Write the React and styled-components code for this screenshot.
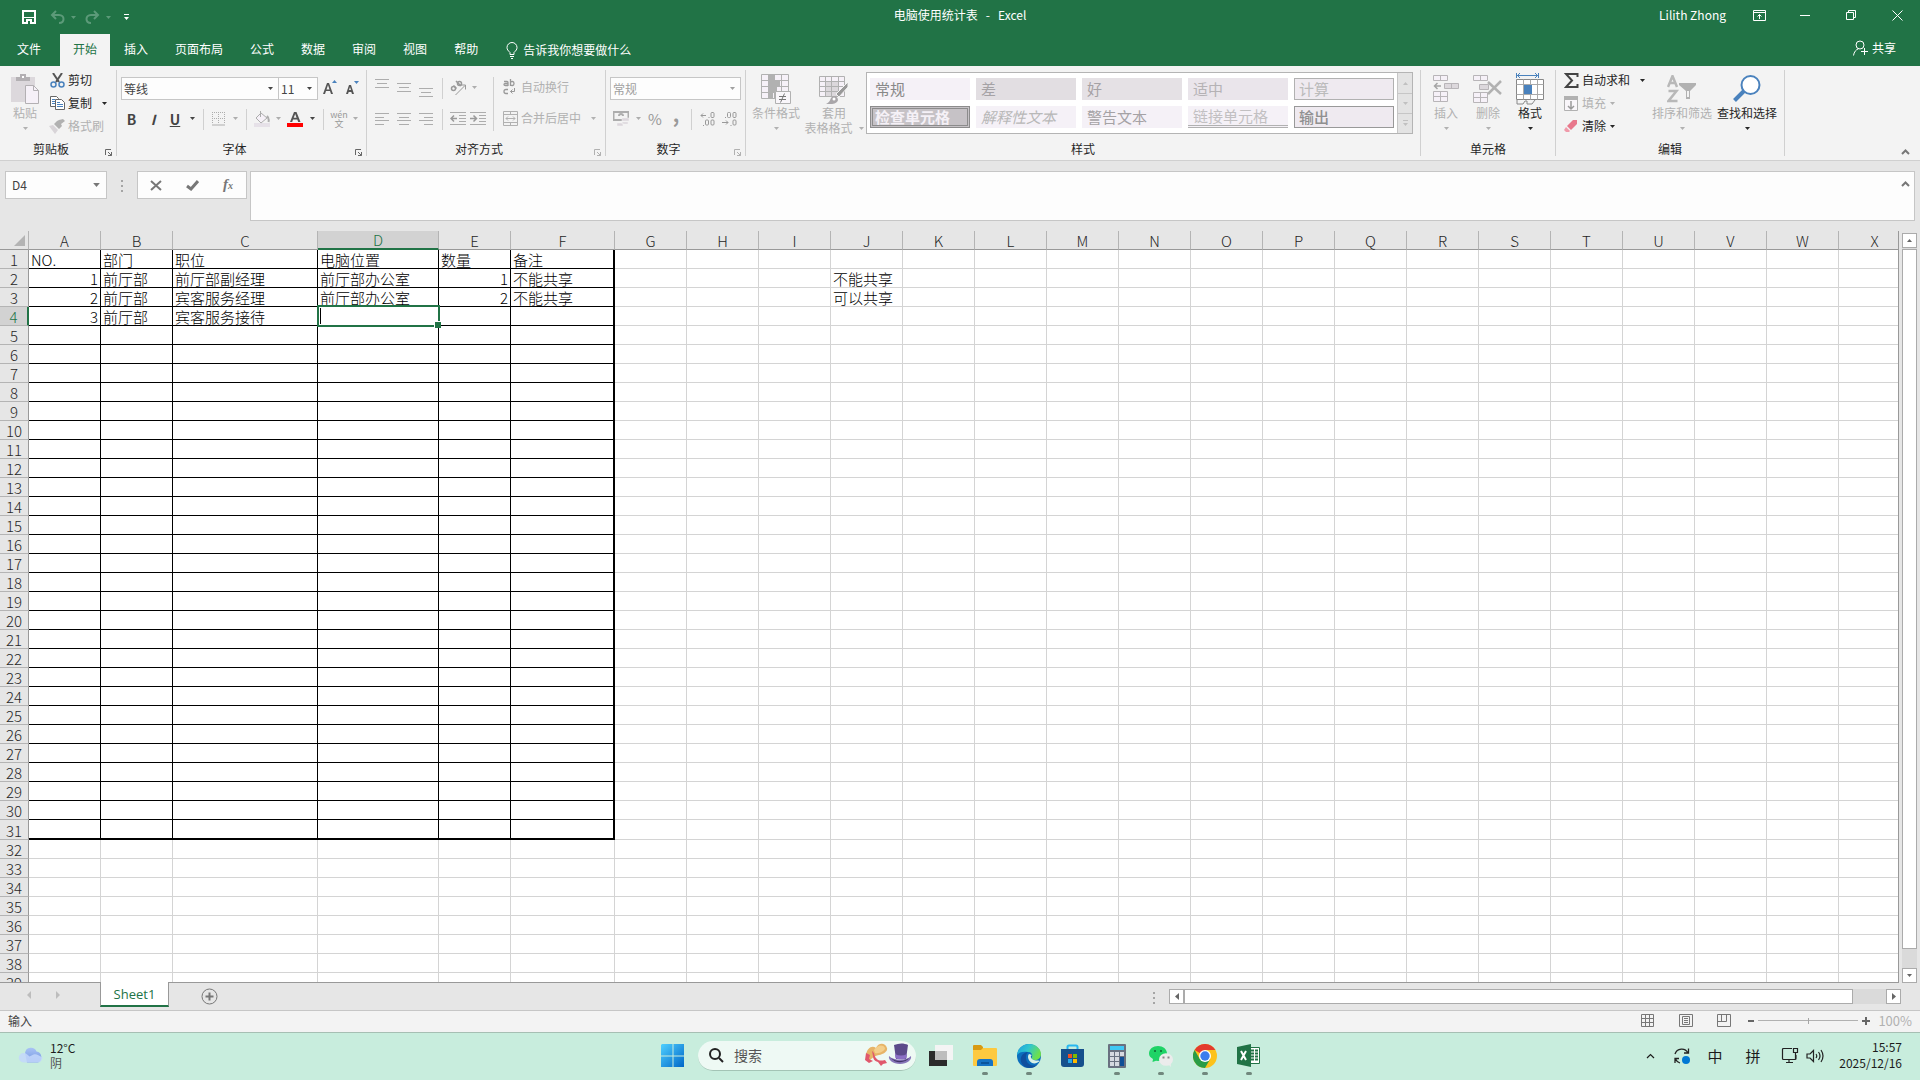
import React from 'react';
import styled, { createGlobalStyle, css } from 'styled-components';

const GREEN = '#217346';

/* ---------- data ---------- */

const COLUMNS = [
	['A', 72], ['B', 72], ['C', 145], ['D', 121], ['E', 72], ['F', 104],
	...'GHIJKLMNOPQRSTUVWX'.split('').map(name => [name, 72]),
];
const ROW_COUNT = 39;
const TABLE_WIDTH = COLUMNS.reduce((sum, col) => sum + col[1], 29);

const CELLS = {
	A1: 'NO.', B1: '部门', C1: '职位', D1: '电脑位置', E1: '数量', F1: '备注',
	A2: 1, B2: '前厅部', C2: '前厅部副经理', D2: '前厅部办公室', E2: 1, F2: '不能共享', J2: '不能共享',
	A3: 2, B3: '前厅部', C3: '宾客服务经理', D3: '前厅部办公室', E3: 2, F3: '不能共享', J3: '可以共享',
	A4: 3, B4: '前厅部', C4: '宾客服务接待',
};

const TABS = ['插入', '页面布局', '公式', '数据', '审阅', '视图', '帮助'];

const STYLES = [
	['常规', 'normal'], ['差', 'bad'], ['好', 'good'], ['适中', 'neutral'], ['计算', 'calc'],
	['检查单元格', 'check'], ['解释性文本', 'explain'], ['警告文本', 'warn'], ['链接单元格', 'linked'], ['输出', 'output'],
];

/* ---------- icons ---------- */

const Caret = ({ up }) => (
	<svg width="5" height="3" viewBox="0 0 5 3" fill="currentColor"><path d={up ? 'M0 3h5L2.5 0z' : 'M0 0h5L2.5 3z'} /></svg>
);

const Svg = ({ w = 16, h = 16, children, ...rest }) => (
	<svg width={w} height={h} viewBox={`0 0 ${w} ${h}`} fill="none" stroke="currentColor" {...rest}>{children}</svg>
);

const SaveIcon = () => (
	<Svg w={14} h={14} strokeWidth="2"><path d="M1 1h12v12H1z" /><path d="M1 7.500h12" strokeWidth="1" /><path d="M4 9h6v5H4z" fill="currentColor" stroke="none" /><path d="M6 11h2v3H6z" fill={GREEN} stroke="none" /></Svg>
);
const UndoIcon = ({ flip }) => (
	<Svg w={15} h={15} strokeWidth="2" transform={flip ? 'scale(-1 1)' : undefined}><path d="M6 1 2 5l4 4M2 5h7c3 0 4.500 2 4.500 4 0 2.500-2 4-4.500 4" /></Svg>
);
const CustomizeIcon = () => (
	<Svg w={7} h={7} fill="currentColor" stroke="none"><path d="M1 0h5v1H1zM1 3h5L3.500 6z" /></Svg>
);
const DisplayIcon = () => (
	<Svg w={13} h={11}><path d="M.5.5h12v10H.5zM.5 2.500h12M6.500 9V4.500M4.500 6.500l2-2 2 2" /></Svg>
);
const MinIcon = () => <Svg w={10} h={10}><path d="M0 5.500h10" /></Svg>;
const RestoreIcon = () => <Svg w={10} h={10}><path d="M.5 2.500h7v7h-7zM2.500 2.500v-2h7v7h-2" /></Svg>;
const CloseIcon = () => <Svg w={11} h={11}><path d="m.5.5 10 10M10.500.5l-10 10" /></Svg>;
const BulbIcon = () => (
	<Svg w={12} h={17}><path d="M4 12.500v-2C2 8.500 1 7.500 1 5.500a5 5 0 0 1 10 0c0 2-1 3-3 5v2zM4 14.500h4M5 16.500h2" /></Svg>
);
const PersonIcon = () => (
	<Svg w={15} h={16}><circle cx="7" cy="5" r="4" /><path d="M.5 15.500C1 12 3 9.500 5.500 8.800M11.500 8v7M8 11.500h7" /></Svg>
);

const PasteIcon = () => (
	<Svg w={30} h={30}><path d="M1 3h24v25H1z" fill="#dcd8dc" stroke="none" /><path d="M6 7V3h4V0h6v3h4v4z" fill="#b3b0b3" stroke="none" /><path d="M12 2h2v2h-2z" fill="#fff" stroke="none" /><path d="M15.500 11.500h8l5 5v13h-13z" fill="#f6f1f8" stroke="#b3b0b3" /><path d="M23.500 11.500v5h5" stroke="#b3b0b3" /></Svg>
);
const CutIcon = () => (
	<Svg w={15} h={15}><path d="M3 0l6 9M12 0L6 9" stroke="#555" strokeWidth="2" /><circle cx="3.500" cy="11.500" r="2.500" stroke="#4a82bd" strokeWidth="1.500" /><circle cx="11.500" cy="11.500" r="2.500" stroke="#4a82bd" strokeWidth="1.500" /></Svg>
);
const CopyIcon = () => (
	<Svg w={15} h={14} stroke="#666"><path d="M.5.5h6l2 2v8h-8z" fill="#fff" /><path d="M2 3.500h3M2 5.500h3M2 7.500h3" stroke="#4a82bd" /><path d="M5.500 3.500h6l3 3v7h-9z" fill="#fff" /><path d="M7 6.500h3M7 8.500h6M7 10.500h6" stroke="#4a82bd" /></Svg>
);
const BrushIcon = () => (
	<Svg w={16} h={15} stroke="none"><path d="M10 1l4-1 2 2-4 3 1 2-3 3-5-5 3-3z" fill="#b1b1b1" /><path d="M4 6l5 5-3 4L0 7z" fill="#d8d4d8" /></Svg>
);
const GrowIcon = () => (
	<Svg w={15} h={15} stroke="none"><path d="M9 3l2.500-3L14 3z" fill="#4a82bd" /><path d="M0 14L4 3h2l4 11H8l-1-3H3l-1 3zM3.500 9.500h3L5 5z" fill="#555" /></Svg>
);
const ShrinkIcon = () => (
	<Svg w={15} h={15} stroke="none"><path d="M9 1h5l-2.500 3z" fill="#4a82bd" /><path d="M1 14L4 5h2l3 9H7l-.7-2H3.700L3 14zM4 10h2L5 7z" fill="#555" /></Svg>
);
const BordersIcon = () => (
	<Svg w={14} h={14}><path d="M.5 0v12M6.500 0v12M12.500 0v12M0 .5h13M0 6.500h13" strokeDasharray="1 1" /><path d="M0 13h13" /></Svg>
);
const FillColorIcon = () => (
	<Svg w={16} h={16}><path d="M0 12h16v4H0z" fill="#e6e1e8" stroke="none" /><path d="M7 2l6 5-6 5-5-5zM6.500 0v6" fill="#f6f1f8" /><path d="M13 5c2 2 2 4 1.500 6" strokeWidth="2" /></Svg>
);
const FontColorIcon = () => (
	<Svg w={16} h={16} stroke="none"><path d="M3 11L7 1h2.500l4 10h-2.300l-.9-2.500H6L5.200 11zM6.700 6.800h2.900L8.200 3z" fill="#555" /><path d="M0 12h16v4H0z" fill="#f00" /></Svg>
);
const AlignIcon = ({ lines, h = 12 }) => (
	<Svg w={14} h={h}>{lines.map(([x, y, len]) => <path key={y} d={`M${x} ${y}.5h${len}`} />)}</Svg>
);
const OrientIcon = () => (
	<Svg w={17} h={16}><path d="M5.500 15L15 5.500M11 5h4.500v4.500" /><circle cx="3.500" cy="8.500" r="2" strokeWidth="1.500" /><path d="M3.500 5.500l3 3M6 1l5 5" strokeWidth="1.500" /><circle cx="9.500" cy="3.500" r="2" strokeWidth="1.500" /></Svg>
);
const IndentIcon = ({ right }) => (
	<Svg w={16} h={13}><path d="M0 .5h16M9 3.500h7M9 6.500h7M9 9.500h7M0 12.500h16" /><path d={right ? 'M0 6.500h6M3.500 3.500l3 3-3 3' : 'M1 6.500h6M4 3.500l-3 3 3 3'} stroke="#999" strokeWidth="1.500" /></Svg>
);
const WrapIcon = () => (
	<Svg w={14} h={16} stroke="#999"><path d="M1 2.500h3q1 0 1 1V7M5 4.500H2.500q-1.500 0-1.500 1t1.500 1H5M7.500 0v7M7.500 3.500q0-1 1.500-1h.5q1.500 0 1.500 2t-1.500 2H9q-1.500 0-1.500-1M5 10.500H3q-2 0-2 2t2 2h2" strokeWidth="1.300" /><path d="M11.500 9v3.500h-4M9.500 10.500l-2 2 2 2" /></Svg>
);
const MergeIcon = () => (
	<Svg w={15} h={15}><path d="M.5.5h14v14H.5zM.5 3.500h14M.5 11.500h14M7.500.5v3M7.500 11.500v3M3 7.500h9M5 5.500l-2 2 2 2M10 5.500l2 2-2 2" /></Svg>
);
const CurrencyIcon = () => (
	<Svg w={16} h={16}><path d="M.5 1h15v8H.5z" strokeWidth="2" /><path d="M6 5a2 2 0 1 1 4 0" strokeWidth="2" /><path d="M9 7h7v3H9zM9 11h6v2H9zM4 12h6v3H4z" fill="#dcd6dc" stroke="#f3f3f3" strokeWidth=".5" /></Svg>
);
/* small zeros and dots around an arrow */
const DecimalIcon = ({ less }) => (
	<Svg w={16} h={14} stroke="#999">
		{less
			? <><path d="M3 5.500h1M9 8.500" strokeWidth="1" /><rect x="5.500" y=".5" width="3" height="5" rx="1" /><rect x="11" y=".5" width="3" height="5" rx="1" /><path d="M0 10.500h6M4 8.500l2 2-2 2M8.500 13.500h1" /><rect x="11" y="8" width="3" height="5" rx="1" /></>
			: <><path d="M1 3.500h5M3 1.500l-2 2 2 2M8.500 5.500h1M3 13.500h1" /><rect x="11" y=".5" width="3" height="5" rx="1" /><rect x="5.500" y="8" width="3" height="5" rx="1" /><rect x="11" y="8" width="3" height="5" rx="1" /></>}
	</Svg>
);
const LauncherIcon = () => <Svg w={7} h={7}><path d="M.5 6V.5H6M3 3l3.500 3.500M6.500 3v3.500H3" /></Svg>;

const CondIcon = () => (
	<Svg w={30} h={30} stroke="#b1b1b1"><path d="M.5.5h27v24H.5z" fill="#f6f1f8" /><path d="M.5 6.500h27M.5 12.500h27M.5 18.500h27M7.500.5v24M13.500.5v24M20.500.5v24" /><path d="M8 1h6v6H8zM8 7h11v6H8zM8 13h8v6H8zM8 19h4v6H8z" fill="#b1b1b1" stroke="none" /><path d="M14.500 17.500h15v12h-15z" fill="#f9f6fa" /><path d="M18 22.500h7M18 25.500h7M23.500 19.500l-4 9" stroke="#777" /></Svg>
);
const TableFormatIcon = () => (
	<Svg w={30} h={30} stroke="#b1b1b1"><path d="M.5 2.500h25v20H.5z" fill="#f6f1f8" /><path d="M7 8h12v14H7z" fill="#dcd8dc" stroke="none" /><path d="M.5 7.500h25M.5 12.500h25M.5 17.500h25M6.500 2.500v20M12.500 2.500v20M19.500 2.500v20" /><path d="M29 8v5l-9 10-3-3z" fill="#999" stroke="#f3f3f3" /><path d="M7 30c4-2 4-4 5-6 2-3 7-2 7 2 0 3-6 5-12 4z" fill="#a9a6a9" stroke="none" /><circle cx="15" cy="25" r="1.500" fill="#fff" stroke="none" /></Svg>
);
const InsertIcon = () => (
	<Svg w={28} h={28} stroke="#b8b5b8" fill="#f6f1f8"><path d="M1.500.5h14v5h-14zM8.500.5v5M1.500 16.500h14v10h-14zM1.500 21.500h14M8.500 16.500v10" /><path d="M12.500 8.500h14v5h-14z" fill="#dcd8dc" /><path d="M19.500 8.500v5" /><path d="M9 11H3M5.500 8l-3 3 3 3" stroke="#a5a5a5" strokeWidth="1.500" fill="none" /></Svg>
);
const DeleteIcon = () => (
	<Svg w={30} h={28} stroke="#b8b5b8" fill="#f6f1f8"><path d="M.5.500h14v5H.5zM7.500.5v5M.5 17.500h14v10H.5zM.5 22.500h14M7.500 17.500v10" /><path d="M6.500 9.500h9v5h-9z" fill="#dcd8dc" /><path d="M15 7l13 12M28 6L15 19" stroke="#b1b1b1" strokeWidth="2.500" /></Svg>
);
const FormatIcon = () => (
	<Svg w={28} h={32}><path d="M.5 0v5M22.500 0v5M1 2.500h21M4 0L1.500 2.500 4 5M19 0l2.500 2.500L19 5" stroke="#4a82bd" /><path d="M.5 6.500h27v20H.5z" fill="#fff" stroke="#888" /><path d="M.5 11.500h27M.5 21.500h27M7.500 6.500v20M14.500 6.500v20M21.500 6.500v20" stroke="#aaa" /><path d="M8 12h8v9H8z" fill="#4a82bd" stroke="none" /><path d="M1 27v4h6l2-3h2v3h5l3-4" stroke="#888" /></Svg>
);
const SumIcon = () => <Svg w={15} h={15} strokeWidth="2" stroke="#444"><path d="M13.500 4V1H2l6 6.500L2 14h11.500v-3" /></Svg>;
const FillIcon = () => <Svg w={14} h={15}><path d="M.5.5h13v14H.5z" fill="#f9f6fa" /><path d="M0 0h14v4H0z" fill="currentColor" stroke="none" /><path d="M7 5v8M4 10l3 3 3-3" stroke="#999" strokeWidth="1.500" /></Svg>;
const EraserIcon = () => <Svg w={14} h={14} stroke="none"><path d="M9 1h4v4l-6 6-4-4z" fill="#e8788c" /><path d="M2 8l4 4-1 1H2L0 11z" fill="#f09aaa" /></Svg>;
const SortIcon = () => (
	<Svg w={30} h={28}><path d="M1 12L5.500 1 10 12M2.500 8h6M1.500 16h8L1.500 26h9" strokeWidth="2.500" stroke="#b8b8b8" /><path d="M12 8h17v2l-6 6v8h-4v-8l-7-6z" fill="#b1b1b1" stroke="none" /><path d="M20 16h2v6h-2z" fill="#f3f3f3" stroke="none" /></Svg>
);
const FindIcon = () => (
	<Svg w={30} h={30} stroke="#4a82bd"><circle cx="18.500" cy="11" r="9" fill="#fff" strokeWidth="2" /><path d="M12 17L2.500 26.500" strokeWidth="4" /></Svg>
);
const ChevronIcon = ({ w = 9, stroke = 2 }) => <svg width={w} height="6" viewBox="0 0 9 6" fill="none" stroke="currentColor" strokeWidth={stroke}><path d="M1 5l3.500-3.500L8 5" /></svg>;

const CloudIcon = () => (
	<svg width="26" height="18" viewBox="0 0 26 18">
		<defs><linearGradient id="cloud" x1="0" y1="0" x2="0" y2="1"><stop offset="0" stopColor="#a9c3f5" /><stop offset="1" stopColor="#7397e0" /></linearGradient></defs>
		<path d="M7 7a6 6 0 0 1 11.500-1.500A5.800 5.800 0 0 1 20 16.500H9z" fill="url(#cloud)" />
		<path d="M5.500 16.500a4.700 4.700 0 0 1 0-9.500c3 0 4 2 6 3.500l4-2c3-1 5 1 9 3-.5 3-2 5-5 5z" fill="#c3d7fb" opacity=".85" />
	</svg>
);
const WindowsIcon = () => (
	<svg width="24" height="24" viewBox="0 0 24 24">
		<defs><linearGradient id="win" x1="0" y1="0" x2="1" y2="1"><stop offset="0" stopColor="#4fd0ff" /><stop offset="1" stopColor="#0067c8" /></linearGradient></defs>
		<path d="M1 0h10.500v11.500H0V1zM12.500 0H23v11.500H12.500zM0 12.500h11.500V23H0zM12.500 12.500H23V23H12.500z" fill="url(#win)" />
	</svg>
);
const HatsIcon = () => (
	<svg width="48" height="24" viewBox="0 0 48 24">
		<path d="M2 12C3 5 8 2 12 5c2-5 9-6 11 0 1 3-3 6-8 7C9 13 7 17 4 18z" fill="#e7b468" />
		<path d="M10 7c3-5 9-6 11-2 0 3-6 6-10 5z" fill="#f4cf8c" />
		<path d="M2 10l4 2-1 4 4 2-4 2-4-3zM8 8c3 2 2 5 4 7 2 3 5 3 9 2l2 3-4 1-2 2-3-4c-4-1-5-4-5-6z" fill="#e0586c" />
		<path d="M30 2c5-2 10-2 14 0l-2 14H32z" fill="#5b4a8a" />
		<path d="M31 11c4 2 8 2 12 0l-.5 4c-4 2-7 2-11 0z" fill="#8b6fc4" />
		<path d="M25 13c5 5 17 5 22 0 1 4-4 8-11 8s-12-4-11-8z" fill="#8674b8" />
		<path d="M27 15c5 4 13 4 18 0-3 5-14 6-18 0z" fill="#413367" />
	</svg>
);
const TaskViewIcon = () => (
	<svg width="24" height="24" viewBox="0 0 24 24"><path d="M0 7h18v15H0z" fill="#2b2b2b" /><path d="M6 1h18v15H6z" fill="#f4f4f4" /><path d="M6 7h12v9H6z" fill="#bdbdbd" /></svg>
);
const FolderIcon = () => (
	<svg width="24" height="24" viewBox="0 0 24 24"><path d="M0 2q0-1 1-1h7l2 2v4H0z" fill="#d89a12" /><path d="M0 6h8l2-2h13q1 0 1 1v16q0 1-1 1H1q-1 0-1-1z" fill="#fdc93f" /><path d="M4 22v-4q0-3 3-3h10q3 0 3 3v4z" fill="#1673c4" /><path d="M8 18h8v2H8z" fill="#0b559c" /></svg>
);
const EdgeIcon = () => (
	<svg width="24" height="24" viewBox="0 0 24 24">
		<defs><linearGradient id="edge" x1="0" y1="0" x2="1" y2=".4"><stop offset="0" stopColor="#1a9fe0" /><stop offset=".5" stopColor="#2fc6cf" /><stop offset="1" stopColor="#6de04c" /></linearGradient></defs>
		<circle cx="12" cy="12" r="12" fill="#0c6ebd" />
		<path d="M0 11C1 4 6 0 12 0c7 0 12 5 12 10 0 4-3 6-6 6-3 0-4-1-3-3 1-3-1-5-4-5-5-1-9 0-11 3z" fill="url(#edge)" />
		<path d="M8 23C1 18 3 9 11 8c-3 3-3 9 1 12 3 2 7 2 9 0-3 4-8 5-13 3z" fill="#0f4f9e" />
		<path d="M12 10c-2 2-1 7 3 9 3 1 5 0 8-2-2-1-6 0-8-2-1-1-2-3 0-4z" fill="#d8f0e6" />
	</svg>
);
const StoreIcon = () => (
	<svg width="24" height="24" viewBox="0 0 24 24"><path d="M6.500 6V3q0-1.500 1.500-1.500h7q1.500 0 1.500 1.500v3" fill="none" stroke="#28b8f0" strokeWidth="2" /><path d="M0 5h23v15q0 3-3 3H3q-3 0-3-3z" fill="#16508c" /><path d="M7 10h4v4H7z" fill="#f25022" /><path d="M12 10h4v4h-4z" fill="#7fba00" /><path d="M7 15h4v4H7z" fill="#28a8ea" /><path d="M12 15h4v4h-4z" fill="#ffb900" /></svg>
);
const CalcIcon = () => (
	<svg width="24" height="24" viewBox="0 0 24 24"><rect x="3" width="18" height="24" rx="1" fill="#697180" /><path d="M5 2h14v4H5z" fill="#3fc8f4" />
		{[8, 13, 18].map(y => [5, 10, 15].map(x => <path key={x + '-' + y} d={`M${x} ${y}h4v4h-4z`} fill={x === 15 && y > 8 ? '#0f4f96' : '#d5d9e0'} />))}
		<path d="M15 13h4v9h-4z" fill="#0f4f96" /></svg>
);
const WechatIcon = () => (
	<svg width="24" height="24" viewBox="0 0 24 24"><path d="M9 2c5 0 9 3 9 7.500S14 17 9 17l-2-.3L3.500 18l.5-3C1.500 13.500 0 12 0 9.500 0 5 4 2 9 2z" fill="#1fd366" /><ellipse cx="17" cy="15.500" rx="7" ry="6.300" fill="#ececec" /><path d="M19 20l3 3-.5-4z" fill="#ececec" /><path d="M5 6h2v2H5zM11 6h2v2h-2z" fill="#11803d" /><path d="M13.500 12.500h2v2h-2zM18.500 12.500h2v2h-2z" fill="#888" /></svg>
);
const ChromeIcon = () => (
	<svg width="24" height="24" viewBox="0 0 24 24"><circle cx="12" cy="12" r="12" fill="#fcc21b" /><path d="M12 12L1.600 6A12 12 0 0 1 22.400 6H12z" fill="#e33b2e" /><path d="M1.600 6A12 12 0 0 0 12 24l5.200-9-5.200-3-5.200 3z" fill="#2a9c46" /><circle cx="12" cy="12" r="6" fill="#fff" /><circle cx="12" cy="12" r="4.700" fill="#3b7ded" /></svg>
);
const ExcelIcon = () => (
	<svg width="24" height="24" viewBox="0 0 24 24"><path d="M12 3.500h10.500v16H12z" fill="#fff" stroke={GREEN} /><path d="M14 6.500h3M18 6.500h3M14 9.500h3M18 9.500h3M14 12.500h3M18 12.500h3M14 15.500h3M18 15.500h3" stroke={GREEN} strokeWidth="2" /><path d="M0 3l14-3v23L0 20z" fill={GREEN} /><path d="M4 7l5 9M9 7l-5 9" stroke="#fff" strokeWidth="2" /></svg>
);
const SyncIcon = () => (
	<svg width="18" height="18" viewBox="0 0 18 18" fill="none" stroke="#222" strokeWidth="1.300"><path d="M2 7a7 7 0 0 1 13-1M15.500 1.500V6H11M2 16v-4.500h4M2.500 12A7 7 0 0 0 7 16" /><circle cx="13" cy="13" r="4" fill="#0078d4" stroke="none" /></svg>
);
const MonitorIcon = () => (
	<svg width="18" height="17" viewBox="0 0 18 17" fill="none" stroke="#222" strokeWidth="1.200"><path d="M11 1.500H2.500q-1 0-1 1v9q0 1 1 1H14q1 0 1-1V8M5 15.500h7M8 12.500v3M12.500 1.500h4v4h-4zM14.500 5.500V12" /></svg>
);
const VolumeIcon = () => (
	<svg width="18" height="16" viewBox="0 0 18 16" fill="none" stroke="#222" strokeWidth="1.200"><path d="M1 6h3l3.500-3.500v11L4 10H1zM10 6q1.500 2 0 4M12.500 4q3 4 0 8M15 2q4 6 0 12" /></svg>
);

/* ---------- base ---------- */

const GlobalStyle = createGlobalStyle`
*{box-sizing:border-box;}
body{margin:0;font-family:"Noto Sans CJK SC","Noto Sans",sans-serif;font-size:12px;line-height:16px;color:#262626;overflow:hidden;}
button,input,select,textarea{font:inherit;color:inherit;margin:0;padding:0;border:0;background:none;outline:none;border-radius:0;}
svg{display:block;flex:none;}
`;

const AppWindow = styled.div`
display:flex;
flex-direction:column;
height:100vh;
background:#e6e6e6;
`;

/* ---------- title and tabs ---------- */

const TitleBar = styled.header`
display:grid;
grid-template-columns:1fr auto 1fr;
height:34px;
padding-bottom:4px;
background:${GREEN};
color:#fff;
align-items:center;
`;
const QuickAccess = styled.div`
display:flex;
align-items:center;
padding:4px 0 0 22px;
`;
const QuickButton = styled.button`
display:flex;
align-items:center;
gap:6px;
margin-right:${p => p.$gap || 9}px;
color:${p => (p.disabled ? '#5c9a79' : '#fff')};
`;
const Title = styled.h1`
margin:0;
font-size:12px;
font-weight:400;
white-space:pre;
`;
const WindowControls = styled.div`
display:flex;
align-items:center;
justify-content:flex-end;
height:30px;
`;
const UserName = styled.span`
margin-right:10px;
`;
const WindowButton = styled.button`
display:flex;
align-items:center;
justify-content:center;
width:46px;
height:30px;
`;
const TabBar = styled.nav`
display:flex;
align-items:stretch;
gap:1px;
height:32px;
padding:0 24px 0 4px;
background:${GREEN};
color:#fff;
`;
const Tab = styled.button`
padding:0 13px 3px;
${p => p.$file && 'margin-right:5px;'}
${p => p.$active && `background:#f3f3f3;color:${GREEN};`}
`;
const TellMe = styled.button`
display:flex;
align-items:center;
gap:5px;
margin-left:14px;
`;
const Share = styled.button`
display:flex;
align-items:center;
gap:4px;
margin-left:auto;
padding-bottom:5px;
`;

/* ---------- ribbon ---------- */

const Ribbon = styled.section`
display:flex;
flex:none;
height:95px;
padding:4px 0;
background:#f3f3f3;
border-bottom:1px solid #d0d0d0;
`;
const GroupBox = styled.div`
display:flex;
flex-direction:column;
flex:none;
padding:0 4px;
border-right:1px solid #d0d0d0;
`;
const GroupBody = styled.div`
display:flex;
flex:1;
`;
const GroupFooter = styled.div`
display:flex;
align-items:center;
height:14px;
line-height:14px;
text-align:center;
span{flex:1;}
`;
const Launcher = styled.button`
display:flex;
width:14px;
height:14px;
align-items:flex-end;
justify-content:flex-end;
color:${p => (p.disabled ? '#b1b1b1' : '#666')};
`;
const BigButton = styled.button`
display:flex;
flex-direction:column;
align-items:center;
width:${p => p.$w}px;
padding-top:3px;
white-space:nowrap;
color:${p => (p.disabled ? '#b1b1b1' : '#262626')};
`;
const BigIcon = styled.span`
display:flex;
align-items:center;
height:32px;
`;
const ArrowLine = styled.span`
display:flex;
align-items:center;
gap:6px;
height:14px;
line-height:14px;
`;
const SmallColumn = styled.div`
display:flex;
flex-direction:column;
width:${p => p.$w}px;
`;
const SmallButton = styled.button`
display:flex;
align-items:center;
height:23px;
padding-bottom:3px;
white-space:nowrap;
color:${p => (p.disabled ? '#b1b1b1' : '#262626')};
> span{margin-right:${p => p.$gap || 4}px;}
`;
const SmallIcon = styled.i`
display:flex;
justify-content:center;
width:22px;
`;
const Rows = styled.div`
display:flex;
flex-direction:column;
gap:8px;
padding-top:7px;
padding-right:${p => (p.$end ? 5 : 0)}px;
`;
const Row = styled.div`
display:flex;
align-items:center;
height:23px;
`;
const Tool = styled.button`
display:flex;
align-items:center;
justify-content:center;
width:${p => p.$w || 22}px;
height:22px;
padding-bottom:${p => (p.$raised ? 12 : 2)}px;
font-size:${p => p.$size || 14}px;
color:${p => (p.disabled ? (p.$strong ? '#999' : '#adadad') : '#444')};
`;
const Drop = styled(Tool)`
width:12px;
`;
const Divider = styled.span`
flex:none;
width:1px;
height:${p => (p.$tall ? 54 : 21)}px;
margin:0 5px;
background:#d0d0d0;
`;
const Phonetic = styled.span`
display:flex;
flex-direction:column;
align-items:center;
font-size:9px;
line-height:9px;
color:#999;
`;
const SelectBox = styled.label`
position:relative;
display:flex;
width:${p => p.$w}px;
height:23px;
margin-right:${p => (p.$joined ? -1 : 0)}px;
background:#fdfdfd;
border:1px solid #c6c6c6;
color:${p => (p.$off ? '#a0a0a0' : '#444')};
select{flex:1;width:100%;padding-left:2px;appearance:none;opacity:1;}
svg{position:absolute;right:5px;top:9px;pointer-events:none;}
`;

const Gallery = styled.div`
display:flex;
height:62px;
margin:2px 3px 0 0;
border:1px solid #b4b4b4;
background:#fff;
`;
const GalleryGrid = styled.div`
display:grid;
grid-template-columns:repeat(5,100px);
grid-auto-rows:22px;
gap:6px;
padding:5px 3px;
`;
const swatches = {
	normal: css`background:#f5f1f7;color:#888;`,
	bad: css`background:#e2dee2;color:#a5a2a5;`,
	good: css`background:#e5e1e5;color:#a5a2a5;`,
	neutral: css`background:#eae5eb;color:#b5b2b5;`,
	calc: css`background:#efeaf0;color:#bbb;border:1px solid #b1b1b1;`,
	check: css`background:#c6c2c6;color:#f5f1f7;border:3px double #8c8c8c;font-weight:700;`,
	explain: css`background:#f5f1f7;color:#b8b8b8;font-style:italic;`,
	warn: css`background:#f5f1f7;color:#a5a2a5;`,
	linked: css`background:#f5f1f7;color:#c2c0c2;border-bottom:3px double #b1b1b1;`,
	output: css`background:#efeaf0;color:#909090;border:1px solid #999;font-weight:500;`,
};
const Swatch = styled.button`
display:flex;
align-items:center;
padding-left:5px;
font-size:15px;
line-height:16px;
white-space:nowrap;
${p => swatches[p.$kind]}
${p => p.$kind === 'check' && 'padding-left:2px;'}
${p => (p.$kind === 'calc' || p.$kind === 'output') && 'padding-left:4px;'}
`;
const GalleryScroll = styled.div`
display:grid;
grid-template-rows:1fr 1fr 1fr;
width:15px;
background:#e3e3e3;
color:#c0c0c0;
button{display:flex;align-items:center;justify-content:center;border-left:1px solid #c6c6c6;}
button + button{border-top:1px solid #c6c6c6;}
`;
const Collapse = styled.button`
display:flex;
align-self:flex-end;
margin:0 10px 0 auto;
padding-bottom:1px;
color:#777;
`;

/* ---------- formula bar ---------- */

const FormulaBar = styled.div`
display:flex;
align-items:flex-start;
flex:none;
height:70px;
padding:10px 5px;
`;
const NameBox = styled.div`
display:flex;
align-items:center;
width:102px;
height:28px;
background:#fdfdfd;
border:1px solid #c6c6c6;
color:#444;
input{flex:1;min-width:0;padding-left:6px;}
button{padding:0 6px;color:#777;}
button svg{width:7px;height:4px;}
`;
const Dots = styled.span`
width:2px;
height:12px;
margin:9px 14px 0;
${p => p.$push && 'margin-left:auto;'}
background:repeating-linear-gradient(#a5a5a5 0 2px,transparent 2px 5px);
`;
const FormulaButtons = styled.div`
display:flex;
width:110px;
height:28px;
background:#fdfdfd;
border:1px solid #c6c6c6;
color:#777;
button{display:flex;flex:1;align-items:center;justify-content:center;}
`;
const Fx = styled.span`
font-family:"Liberation Serif",serif;
font-size:15px;
font-style:italic;
font-weight:700;
small{font-size:10px;}
`;
const FormulaField = styled.div`
display:flex;
flex:1;
height:50px;
margin-left:3px;
background:#fdfdfd;
border:1px solid #c6c6c6;
color:#777;
textarea{flex:1;resize:none;}
button{align-self:flex-start;padding:9px 4px;}
`;

/* ---------- sheet ---------- */

const SheetArea = styled.main`
display:flex;
flex:1;
min-height:0;
`;
const GridFrame = styled.div`
flex:1;
min-width:0;
overflow:hidden;
border-right:1px solid #999;
border-bottom:1px solid #999;
`;
const Grid = styled.table`
width:${TABLE_WIDTH}px;
table-layout:fixed;
border-collapse:separate;
border-spacing:0;
font-size:15px;
font-weight:300;
line-height:17px;
color:#000;
`;
const HeadCell = styled.th`
height:19px;
padding:1px 0 0;
font-weight:300;
line-height:17px;
background:#e6e6e6;
color:#262626;
border-right:1px solid #b4b4b4;
border-bottom:1px solid #999;
${p => p.$side && css`border-right-color:#999;border-bottom-color:#b4b4b4;`}
${p => p.$active && css`background:#d2d2d2;color:${GREEN};`}
${p => p.$active && !p.$side && css`border-bottom:2px solid ${GREEN};line-height:16px;`}
${p => p.$active && p.$side && css`border-right:2px solid ${GREEN};`}
svg{margin-left:14px;}
`;
const Cell = styled.td`
position:relative;
height:${p => (p.$last ? 20 : 19)}px;
padding:0 2px;
white-space:nowrap;
text-align:${p => (p.$num ? 'right' : 'left')};
background:#fff;
border-right:1px solid ${p => (p.$boxed ? '#000' : '#d4d4d4')};
border-bottom:1px solid ${p => (p.$boxed ? '#000' : '#d4d4d4')};
${p => p.$boxed && p.$edge && 'border-right-width:2px;'}
${p => p.$boxed && p.$last && 'border-bottom-width:2px;'}
`;
const Selection = styled.div`
position:absolute;
z-index:1;
top:-2px;
left:-1px;
right:-2px;
bottom:-2px;
border:2px solid ${GREEN};
background:#fff;
&::before{content:"";position:absolute;left:1px;top:1px;width:1px;height:16px;background:#000;}
&::after{content:"";position:absolute;right:-3px;bottom:-3px;width:6px;height:6px;background:${GREEN};border:solid #fff;border-width:1px 0 0 1px;}
`;
const VScroll = styled.div`
display:flex;
flex-direction:column;
width:15px;
margin:2px 3px 0;
background:#dadada;
`;
const ScrollButton = styled.button`
display:flex;
align-items:center;
justify-content:center;
flex:none;
width:15px;
height:15px;
background:#fff;
border:1px solid #ababab;
color:#666;
`;
const VThumb = styled.div`
height:700px;
margin-top:1px;
margin-bottom:auto;
background:#fff;
border:1px solid #ababab;
`;
const SheetBar = styled.div`
display:flex;
align-items:flex-start;
flex:none;
height:27px;
padding-right:19px;
`;
const SheetNav = styled.div`
display:flex;
gap:25px;
width:100px;
padding:8px 0 0 27px;
color:#bdbdbd;
`;
const SheetTab = styled.button`
width:69px;
height:25px;
margin-top:-1px;
background:#fff;
border:solid #999;
border-width:0 1px;
border-bottom:2px solid ${GREEN};
color:${GREEN};
font-family:"Open Sans","Noto Sans",sans-serif;
font-size:13px;
`;
const AddSheet = styled.button`
margin:5px 0 0 32px;
color:#777;
`;
const HScroll = styled.div`
display:flex;
width:732px;
height:15px;
margin-top:6px;
background:#dadada;
`;
const HThumb = styled.div`
width:669px;
margin-right:auto;
background:#fff;
border:1px solid #ababab;
`;
const StatusBar = styled.footer`
display:flex;
align-items:center;
flex:none;
height:22px;
padding:0 8px 2px;
background:#f3f3f3;
border-top:1px solid #c6c6c6;
color:#444;
`;
const ViewButtons = styled.div`
display:flex;
gap:24px;
margin-left:auto;
margin-right:17px;
color:#777;
`;
const Zoom = styled.div`
display:flex;
align-items:center;
gap:4px;
color:#666;
span{margin-left:2px;font-size:13px;color:#b1b1b1;width:36px;text-align:right;}
input{width:100px;height:12px;appearance:none;background:linear-gradient(#b1b1b1,#b1b1b1) center/100% 1px no-repeat;}
input::-webkit-slider-thumb{appearance:none;width:1px;height:6px;background:#a5a5a5;}
`;

/* ---------- task bar ---------- */

const TaskBar = styled.footer`
display:grid;
grid-template-columns:1fr auto 1fr;
flex:none;
height:48px;
padding-bottom:2px;
background:#c8eddd;
border-top:1px solid #a6bfb3;
color:#1c1c1c;
`;
const Weather = styled.button`
display:flex;
align-items:center;
gap:6px;
justify-self:start;
padding:0 0 2px 18px;
text-align:left;
line-height:15px;
small{display:block;font-size:12px;color:#555;}
`;
const Apps = styled.div`
display:flex;
align-items:center;
padding-left:2px;
`;
const AppButton = styled.button`
display:flex;
flex-direction:column;
align-items:center;
justify-content:center;
width:44px;
height:45px;
position:relative;
${p => p.$open && css`&::after{content:"";position:absolute;bottom:3px;width:6px;height:3px;border-radius:2px;background:#71877d;}`}
`;
const SearchBox = styled.label`
display:flex;
align-items:center;
width:218px;
height:30px;
margin:0 3px;
padding:0 4px 0 11px;
border-radius:15px;
background:#eef9f4;
border-bottom:1px solid #a3c4b5;
input{flex:1;min-width:0;margin-left:10px;font-size:14px;}
input::placeholder{color:#555;opacity:1;}
`;
const Tray = styled.div`
display:flex;
align-items:center;
justify-content:flex-end;
padding-right:18px;
`;
const TrayButton = styled.button`
display:flex;
align-items:center;
justify-content:center;
width:${p => p.$w}px;
height:40px;
font-size:15px;
`;
const Clock = styled.time`
width:78px;
padding-bottom:2px;
text-align:right;
line-height:16px;
`;

/* ---------- parts ---------- */

function Group({ label, launcher, off, children }) {
	return (
		<GroupBox>
			<GroupBody>{children}</GroupBody>
			<GroupFooter>
				<span>{label}</span>
				{launcher && <Launcher aria-label={label} disabled={off}><LauncherIcon /></Launcher>}
			</GroupFooter>
		</GroupBox>
	);
}

function Big({ icon, label, w, off }) {
	return (
		<BigButton $w={w} disabled={off}>
			<BigIcon>{icon}</BigIcon>
			{label}
			<ArrowLine><Caret /></ArrowLine>
		</BigButton>
	);
}

function Small({ icon, label, off, arrow, gap }) {
	return (
		<SmallButton disabled={off} $gap={gap}>
			<SmallIcon>{icon}</SmallIcon>
			<span>{label}</span>
			{arrow && <Caret />}
		</SmallButton>
	);
}

function Picker({ label, value, w, off, joined }) {
	return (
		<SelectBox $w={w} $off={off} $joined={joined}>
			<select aria-label={label} disabled={off} defaultValue={value}><option>{value}</option></select>
			<Caret />
		</SelectBox>
	);
}

function RibbonBar() {
	return (
		<Ribbon>
			<Group label="剪贴板" launcher>
				<Big icon={<PasteIcon />} label="粘贴" w={42} off />
				<SmallColumn $w={66}>
					<Small icon={<CutIcon />} label="剪切" />
					<Small icon={<CopyIcon />} label="复制" arrow gap={10} />
					<Small icon={<BrushIcon />} label="格式刷" off />
				</SmallColumn>
			</Group>
			<Group label="字体" launcher>
				<Rows>
					<Row>
						<Picker label="字体" value="等线" w={158} joined />
						<Picker label="字号" value="11" w={40} />
						<Tool aria-label="增大字号" $w={24}><GrowIcon /></Tool>
						<Tool aria-label="减小字号" $w={20}><ShrinkIcon /></Tool>
					</Row>
					<Row>
						<Tool $w={21}><b>B</b></Tool>
						<Tool><b><i>I</i></b></Tool>
						<Tool><b><u>U</u></b></Tool>
						<Drop aria-label="下划线"><Caret /></Drop>
						<Divider />
						<Tool $w={20} disabled aria-label="边框"><BordersIcon /></Tool>
						<Drop disabled aria-label="边框选项"><Caret /></Drop>
						<Divider />
						<Tool $w={20} disabled aria-label="填充颜色"><FillColorIcon /></Tool>
						<Drop disabled aria-label="填充颜色选项"><Caret /></Drop>
						<Tool aria-label="字体颜色"><FontColorIcon /></Tool>
						<Drop aria-label="字体颜色选项"><Caret /></Drop>
						<Divider />
						<Tool $w={20} disabled><Phonetic><span>wén</span><span>文</span></Phonetic></Tool>
						<Drop disabled aria-label="拼音选项"><Caret /></Drop>
					</Row>
				</Rows>
			</Group>
			<Group label="对齐方式" launcher off>
				<Rows>
					<Row>
						<Tool disabled aria-label="顶端对齐"><AlignIcon h={18} lines={[[0, 0, 14], [2, 4, 10], [0, 8, 14]]} /></Tool>
						<Tool disabled aria-label="垂直居中"><AlignIcon h={18} lines={[[0, 4, 14], [2, 8, 10], [0, 12, 14]]} /></Tool>
						<Tool disabled aria-label="底端对齐"><AlignIcon h={18} lines={[[0, 9, 14], [2, 13, 10], [0, 17, 14]]} /></Tool>
						<Divider />
						<Tool $w={20} disabled $strong aria-label="方向"><OrientIcon /></Tool>
						<Drop disabled aria-label="方向选项"><Caret /></Drop>
					</Row>
					<Row>
						<Tool disabled aria-label="左对齐"><AlignIcon lines={[[0, 0, 14], [0, 4, 9], [0, 7, 14], [0, 11, 9]]} /></Tool>
						<Tool disabled aria-label="居中"><AlignIcon lines={[[0, 0, 14], [2, 4, 10], [0, 7, 14], [2, 11, 10]]} /></Tool>
						<Tool disabled aria-label="右对齐"><AlignIcon lines={[[0, 0, 14], [5, 4, 9], [0, 7, 14], [5, 11, 9]]} /></Tool>
						<Divider />
						<Tool $w={20} disabled aria-label="减少缩进量"><IndentIcon /></Tool>
						<Tool $w={20} disabled aria-label="增加缩进量"><IndentIcon right /></Tool>
					</Row>
				</Rows>
				<Rows><Divider $tall /></Rows>
				<Rows $end>
					<Small icon={<WrapIcon />} label="自动换行" off />
					<Small icon={<MergeIcon />} label="合并后居中" off arrow gap={10} />
				</Rows>
			</Group>
			<Group label="数字" launcher off>
				<Rows>
					<Row><Picker label="数字格式" value="常规" w={131} off /></Row>
					<Row>
						<Tool disabled aria-label="会计数字格式"><CurrencyIcon /></Tool>
						<Drop disabled aria-label="货币选项"><Caret /></Drop>
						<Tool disabled $strong $size={15}>%</Tool>
						<Tool disabled $strong $raised $w={20} $size={20}><b>,</b></Tool>
						<Divider />
						<Tool disabled aria-label="增加小数位数"><DecimalIcon /></Tool>
						<Tool disabled aria-label="减少小数位数"><DecimalIcon less /></Tool>
					</Row>
				</Rows>
			</Group>
			<Group label="样式">
				<Big icon={<CondIcon />} label="条件格式" w={52} off />
				<BigButton $w={64} disabled>
					<BigIcon><TableFormatIcon /></BigIcon>
					套用
					<ArrowLine>表格格式 <Caret /></ArrowLine>
				</BigButton>
				<Gallery>
					<GalleryGrid>
						{STYLES.map(([name, kind]) => <Swatch key={kind} $kind={kind}>{name}</Swatch>)}
					</GalleryGrid>
					<GalleryScroll>
						<button aria-label="上一行"><Caret up /></button>
						<button aria-label="下一行"><Caret /></button>
						<button aria-label="其他"><CustomizeIcon /></button>
					</GalleryScroll>
				</Gallery>
			</Group>
			<Group label="单元格">
				<Big icon={<InsertIcon />} label="插入" w={42} off />
				<Big icon={<DeleteIcon />} label="删除" w={42} off />
				<Big icon={<FormatIcon />} label="格式" w={42} />
			</Group>
			<Group label="编辑">
				<SmallColumn $w={90}>
					<Small icon={<SumIcon />} label="自动求和" arrow gap={10} />
					<Small icon={<FillIcon />} label="填充" off arrow />
					<Small icon={<EraserIcon />} label="清除" arrow />
				</SmallColumn>
				<Big icon={<SortIcon />} label="排序和筛选" w={64} off />
				<Big icon={<FindIcon />} label="查找和选择" w={66} />
			</Group>
			<Collapse aria-label="折叠功能区"><ChevronIcon /></Collapse>
		</Ribbon>
	);
}

function Sheet() {
	const rows = Array.from({ length: ROW_COUNT }, (_, i) => i + 1);
	return (
		<SheetArea>
			<GridFrame>
				<Grid>
					<colgroup>
						<col style={{ width: 29 }} />
						{COLUMNS.map(([name, width]) => <col key={name} style={{ width }} />)}
					</colgroup>
					<thead>
						<tr>
							<HeadCell aria-label="全选"><svg width="11" height="11"><path d="M11 0v11H0z" fill="#b4b4b4" /></svg></HeadCell>
							{COLUMNS.map(([name]) => <HeadCell key={name} scope="col" $active={name === 'D'}>{name}</HeadCell>)}
						</tr>
					</thead>
					<tbody>
						{rows.map(row => (
							<tr key={row}>
								<HeadCell as="th" scope="row" $side $active={row === 4}>{row}</HeadCell>
								{COLUMNS.map(([name], i) => {
									const value = CELLS[name + row];
									return (
										<Cell key={name} $boxed={i < 6 && row < 32} $edge={i === 5} $last={row === 31} $num={typeof value === 'number'}>
											{value}
											{name + row === 'D4' && <Selection />}
										</Cell>
									);
								})}
							</tr>
						))}
					</tbody>
				</Grid>
			</GridFrame>
			<VScroll>
				<ScrollButton aria-label="向上"><Caret up /></ScrollButton>
				<VThumb />
				<ScrollButton aria-label="向下"><Caret /></ScrollButton>
			</VScroll>
		</SheetArea>
	);
}

function SheetFooter() {
	return (
		<>
			<SheetBar>
				<SheetNav>
					<svg width="4" height="8" fill="currentColor"><path d="M4 0v8L0 4z" /></svg>
					<svg width="4" height="8" fill="currentColor"><path d="M0 0v8l4-4z" /></svg>
				</SheetNav>
				<SheetTab>Sheet1</SheetTab>
				<AddSheet aria-label="新工作表"><Svg w={17} h={17}><circle cx="8.500" cy="8.500" r="7.500" /><path d="M8.500 4.500v8M4.500 8.500h8" strokeWidth="2" /></Svg></AddSheet>
				<Dots $push />
				<HScroll>
					<ScrollButton aria-label="向左"><svg width="4" height="7" fill="currentColor"><path d="M4 0v7L0 3.500z" /></svg></ScrollButton>
					<HThumb />
					<ScrollButton aria-label="向右"><svg width="4" height="7" fill="currentColor"><path d="M0 0v7l4-3.500z" /></svg></ScrollButton>
				</HScroll>
			</SheetBar>
			<StatusBar>
				输入
				<ViewButtons>
					<Svg w={14} h={13}><path d="M.5.5h12v12H.5zM.5 4.500h12M.5 8.500h12M4.500.5v12M8.500.5v12" /></Svg>
					<Svg w={14} h={13}><path d="M.5.5h13v12H.5zM3.500 2.500h7v8h-7zM5 4.500h4M5 6.500h4M5 8.500h4" /></Svg>
					<Svg w={14} h={13}><path d="M.5.5h13v12H.5zM4.500.5v7M.5 7.500h9M9.500.5v7" /></Svg>
				</ViewButtons>
				<Zoom>
					<Svg w={6} h={8} strokeWidth="2"><path d="M0 4h6" /></Svg>
					<input type="range" aria-label="缩放" defaultValue="50" />
					<Svg w={8} h={8} strokeWidth="2"><path d="M0 4h8M4 0v8" /></Svg>
					<span>100%</span>
				</Zoom>
			</StatusBar>
		</>
	);
}

function DesktopBar() {
	const apps = [['文件资源管理器', FolderIcon, true], ['Edge', EdgeIcon, true], ['商店', StoreIcon, false], ['计算器', CalcIcon, true], ['微信', WechatIcon, true], ['Chrome', ChromeIcon, true], ['Excel', ExcelIcon, true]];
	return (
		<TaskBar>
			<Weather><CloudIcon /><span>12°C<small>阴</small></span></Weather>
			<Apps>
				<AppButton aria-label="开始"><WindowsIcon /></AppButton>
				<SearchBox>
					<Svg w={15} h={15} stroke="#222" strokeWidth="2"><circle cx="6" cy="6" r="5" /><path d="M10 10l4 4" /></Svg>
					<input aria-label="搜索" placeholder="搜索" />
					<HatsIcon />
				</SearchBox>
				<AppButton aria-label="任务视图"><TaskViewIcon /></AppButton>
				{apps.map(([name, Icon, open]) => <AppButton key={name} aria-label={name} $open={open}><Icon /></AppButton>)}
			</Apps>
			<Tray>
				<TrayButton $w={32} aria-label="显示隐藏的图标"><ChevronIcon w={11} stroke={1.2} /></TrayButton>
				<TrayButton $w={32} aria-label="同步"><SyncIcon /></TrayButton>
				<TrayButton $w={34}>中</TrayButton>
				<TrayButton $w={42}>拼</TrayButton>
				<TrayButton $w={32} aria-label="网络"><MonitorIcon /></TrayButton>
				<TrayButton $w={18} aria-label="音量"><VolumeIcon /></TrayButton>
				<Clock>15:57<br />2025/12/16</Clock>
			</Tray>
		</TaskBar>
	);
}

export default function App() {
	return (
		<AppWindow>
			<GlobalStyle />
			<TitleBar>
				<QuickAccess>
					<QuickButton aria-label="保存" $gap={14}><SaveIcon /></QuickButton>
					<QuickButton aria-label="撤消" disabled><UndoIcon /><Caret /></QuickButton>
					<QuickButton aria-label="恢复" disabled $gap={12}><UndoIcon flip /><Caret /></QuickButton>
					<QuickButton aria-label="自定义快速访问工具栏"><CustomizeIcon /></QuickButton>
				</QuickAccess>
				<Title>电脑使用统计表   -   Excel</Title>
				<WindowControls>
					<UserName>Lilith Zhong</UserName>
					<WindowButton aria-label="功能区显示选项"><DisplayIcon /></WindowButton>
					<WindowButton aria-label="最小化"><MinIcon /></WindowButton>
					<WindowButton aria-label="还原"><RestoreIcon /></WindowButton>
					<WindowButton aria-label="关闭"><CloseIcon /></WindowButton>
				</WindowControls>
			</TitleBar>
			<TabBar>
				<Tab $file>文件</Tab>
				<Tab $active>开始</Tab>
				{TABS.map(tab => <Tab key={tab}>{tab}</Tab>)}
				<TellMe><BulbIcon />告诉我你想要做什么</TellMe>
				<Share><PersonIcon />共享</Share>
			</TabBar>
			<RibbonBar />
			<FormulaBar>
				<NameBox>
					<input aria-label="名称框" defaultValue="D4" />
					<button aria-label="名称列表"><Caret /></button>
				</NameBox>
				<Dots />
				<FormulaButtons>
					<button aria-label="取消"><Svg w={12} h={11} strokeWidth="2"><path d="M1 1l10 9M11 1L1 10" /></Svg></button>
					<button aria-label="输入"><Svg w={13} h={11} strokeWidth="3"><path d="M1 6l4 3 7-8" /></Svg></button>
					<button aria-label="插入函数"><Fx>f<small>x</small></Fx></button>
				</FormulaButtons>
				<FormulaField>
					<textarea aria-label="编辑栏" />
					<button aria-label="展开编辑栏"><ChevronIcon /></button>
				</FormulaField>
			</FormulaBar>
			<Sheet />
			<SheetFooter />
			<DesktopBar />
		</AppWindow>
	);
}
